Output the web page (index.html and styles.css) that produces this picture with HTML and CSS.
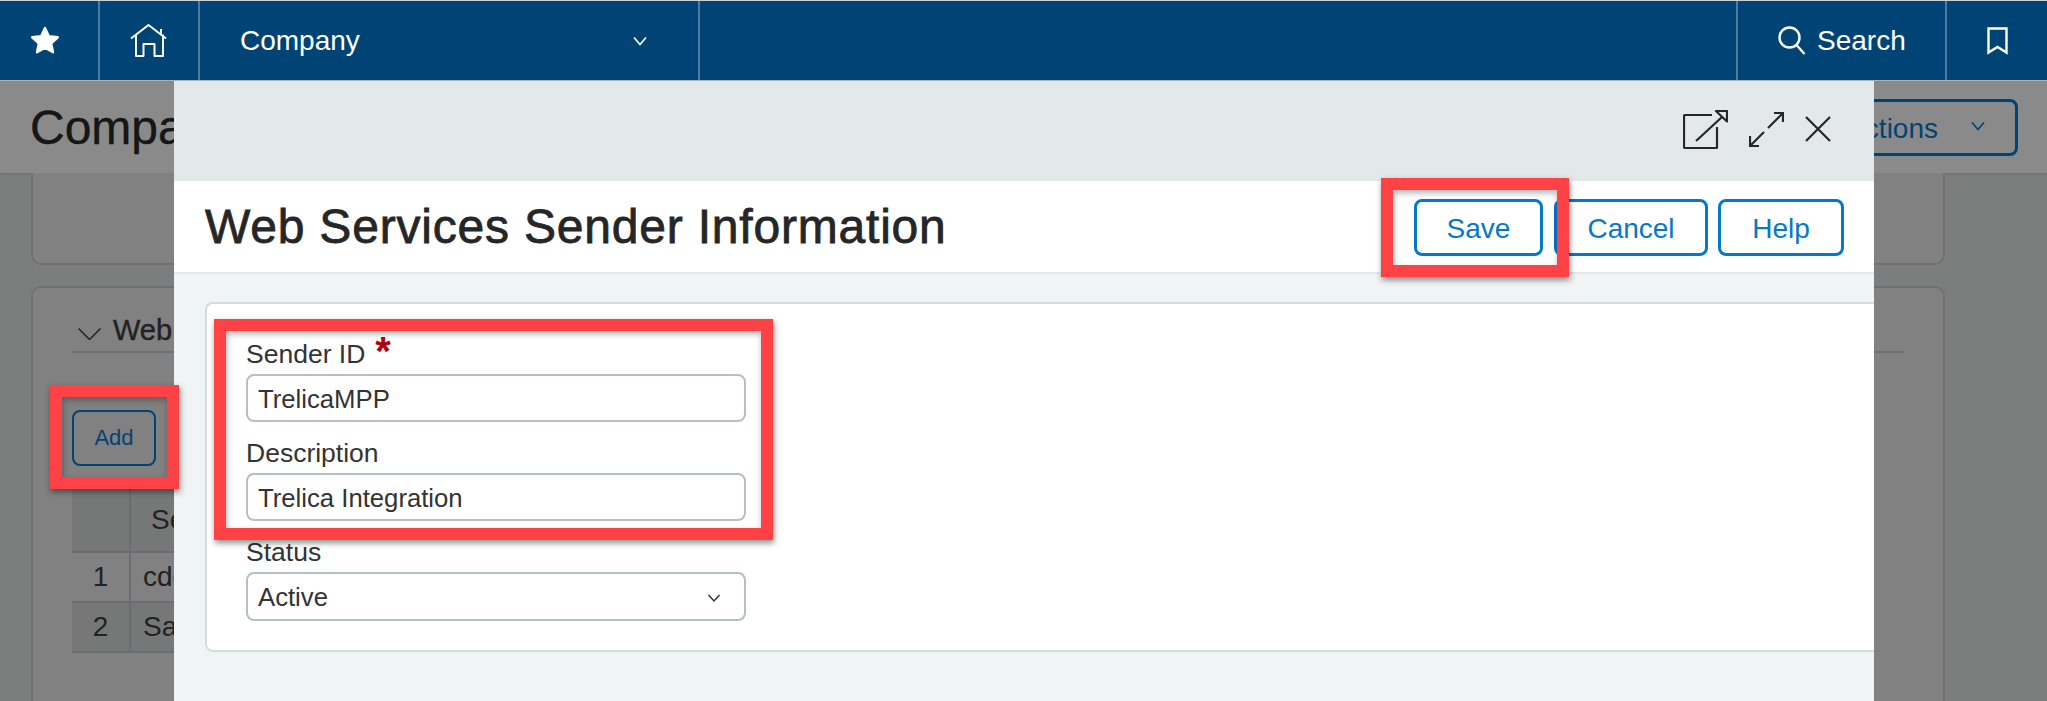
FILE: index.html
```html
<!DOCTYPE html>
<html lang="en">
<head>
  <meta charset="UTF-8" />
  <title>Web Services Sender Information</title>
  <link rel="stylesheet" href="styles.css">
</head>
<body>

  <header class="topbar">
    <div class="topbar-cell star-cell">
      <svg width="30" height="29" viewBox="0 0 30 29"><path d="M15 2l3.800 8.200 9 1.100-6.600 6.100 1.800 8.900-8-4.500-8 4.500 1.800-8.900-6.600-6.100 9-1.100z" fill="#fff" stroke="#fff" stroke-width="2.400" stroke-linejoin="round"/></svg>
    </div>
    <div class="topbar-cell home-cell">
      <svg width="37" height="33" viewBox="0 0 37 33" fill="none" stroke="#fff" stroke-width="2" stroke-linejoin="round"><path d="M1 14.500L18.500 1 36 14.500M6 10.500V32h7.500V20h11v12H33V10.500M31 5v6"/></svg>
    </div>
    <div class="topbar-cell company-cell">
      <span>Company</span>
      <svg width="16" height="12" viewBox="0 0 16 12" fill="none" stroke="#fff" stroke-width="1.600"><path d="M2 2.500l6 7 6-7"/></svg>
    </div>
    <div class="topbar-spacer"></div>
    <div class="topbar-cell search-cell">
      <svg width="29" height="29" viewBox="0 0 29 29" fill="none" stroke="#fff" stroke-width="2.400"><circle cx="11.500" cy="11.500" r="10"/><path d="M18.500 19l8 9"/></svg>
      <span>Search</span>
    </div>
    <div class="topbar-cell mark-cell">
      <svg width="21" height="28" viewBox="0 0 21 28" fill="none" stroke="#fff" stroke-width="2.400"><path d="M1.500 1.500h18v24l-9-5.500-9 5.500z"/></svg>
    </div>
  </header>

  <div class="page">
    <div class="page-title">
      <h1>Company</h1>
      <div class="actions-btn"><span>Actions</span><svg width="16" height="12" viewBox="0 0 16 12" fill="none" stroke="#004476" stroke-width="1.600"><path d="M2 2.500l6 7 6-7"/></svg></div>
    </div>
    <div class="page-card upper-card"></div>
    <div class="page-card lower-card">
      <div class="section-head">
        <svg width="23" height="12" viewBox="0 0 23 12" fill="none" stroke="#222" stroke-width="1.500"><path d="M.5.500l11 11 11-11"/></svg>
        <span>Web</span>
      </div>
      <div class="add-btn">Add</div>
      <table class="senders">
        <tr class="shaded"><th></th><th>Se</th></tr>
        <tr><td class="num">1</td><td>cde</td></tr>
        <tr class="shaded"><td class="num">2</td><td>Sa</td></tr>
      </table>
    </div>
  </div>

  <div class="modal">
    <div class="modal-tools">
      <svg width="45" height="39" viewBox="0 0 45 39" fill="none" stroke="#262626" stroke-width="2.200" stroke-linejoin="round"><path d="M34 17v20.500a.500.500 0 0 1-.500.500H2a1 1 0 0 1-1-1V6a1 1 0 0 1 1-1h27"/><path d="M13 31l26-24"/><path d="M33 1h11v10.500z"/></svg>
      <svg width="35" height="35" viewBox="0 0 35 35" fill="none" stroke="#262626" stroke-width="2.200"><path d="M25 1h9v9M34 1L19 16M15 20L1 34M1 24v10h9"/></svg>
      <svg width="26" height="26" viewBox="0 0 26 26" fill="none" stroke="#262626" stroke-width="2.200"><path d="M1 1l24 24M25 1L1 25"/></svg>
    </div>
    <div class="modal-head">
      <h2>Web Services Sender Information</h2>
      <div class="modal-buttons">
        <button class="modal-btn save-btn">Save</button>
        <button class="modal-btn cancel-btn">Cancel</button>
        <button class="modal-btn help-btn">Help</button>
      </div>
    </div>
    <div class="modal-body">
      <div class="form-card">
        <label>Sender ID<span class="req">*</span></label>
        <div class="field">TrelicaMPP</div>
        <label>Description</label>
        <div class="field">Trelica Integration</div>
        <label>Status</label>
        <div class="field select-field">
          <span>Active</span>
          <svg width="14" height="10" viewBox="0 0 14 10" fill="none" stroke="#333" stroke-width="1.500"><path d="M1.500 2l5.500 6 5.500-6"/></svg>
        </div>
      </div>
    </div>
  </div>

  <div class="mark mark-add"></div>
  <div class="mark mark-save"></div>
  <div class="mark mark-form"></div>

</body>
</html>
```

FILE: styles.css
```css
html, body {
  margin: 0;
  height: 701px;
  overflow: hidden;
}

body {
  font-family: 'Liberation Sans', Arial, sans-serif;
  color: #222;
  background: #7c7e7d;
  position: relative;
}

.topbar {
  display: flex;
  box-sizing: border-box;
  height: 81px;
  background: #004476;
  color: #fff;
  font-size: 28px;
  border-top: 1px solid #c9d3d9;
  border-bottom: 1px solid #a9b2b7;
}

.topbar-cell {
  display: flex;
  align-items: center;
  flex: none;
  box-sizing: border-box;
  border-right: 2px solid #4d7ca0;
}

.star-cell {
  width: 100px;
  justify-content: center;
  padding-right: 8px;
}

.home-cell {
  width: 100px;
  justify-content: center;
  padding-right: 2px;
}

.company-cell {
  width: 500px;
  justify-content: space-between;
  padding: 0 50px 0 40px;
}

.topbar-spacer {
  flex: 1;
  border-right: 2px solid #4d7ca0;
}

.search-cell {
  width: 209px;
  gap: 10px;
  padding-left: 40px;
}

.mark-cell {
  width: 100px;
  justify-content: center;
  border-right: 0;
}

.page {
  height: 620px;
  overflow: hidden;
  background: #7c7e7d;
}

.page-title {
  height: 92px;
  background: #8a8a8a;
  display: flex;
  align-items: center;
  justify-content: space-between;
  padding: 0 29px 0 30px;
  box-shadow: 0 1px 2px rgba(0, 0, 0, 0.15);
}

.page-title h1 {
  margin: 0;
  font-size: 48px;
  font-weight: normal;
  -webkit-text-stroke: 0.4px #161616;
  color: #161616;
}

.actions-btn {
  width: 200px;
  height: 57px;
  box-sizing: border-box;
  border: 3px solid #004476;
  border-radius: 8px;
  display: flex;
  align-items: center;
  justify-content: flex-end;
  gap: 32px;
  padding: 4px 29px 0 0;
  font-size: 28px;
  color: #004476;
}

.actions-btn svg {
  margin-bottom: 6px;
}

.page-card {
  margin: 0 102px 0 31px;
  box-sizing: border-box;
  border: 2px solid #6f7275;
  border-radius: 10px;
  background: #808180;
}

.upper-card {
  height: 92px;
  border-top: 0;
  border-top-left-radius: 0;
  border-top-right-radius: 0;
  margin-bottom: 21px;
}

.lower-card {
  height: 415px;
  border-bottom: 0;
  border-bottom-left-radius: 0;
  border-bottom-right-radius: 0;
  padding: 24px 39px 0 39px;
}

.section-head {
  display: flex;
  align-items: center;
  box-sizing: border-box;
  height: 41px;
  gap: 12px;
  padding: 0 0 3px 6px;
  font-size: 29px;
  -webkit-text-stroke: 0.4px #222;
  border-bottom: 2px solid #6f7275;
}

.section-head svg {
  margin-top: 8px;
}

.add-btn {
  width: 84px;
  height: 56px;
  box-sizing: border-box;
  margin: 57px 0 0 0;
  border: 2px solid #004476;
  border-radius: 8px;
  color: #004476;
  font-size: 22px;
  display: flex;
  align-items: center;
  justify-content: center;
}

.senders {
  margin-top: 22px;
  border-collapse: collapse;
  font-size: 28px;
  width: 800px;
}

.senders th {
  height: 63px;
  font-weight: normal;
  text-align: left;
  padding: 0 0 0 20px;
  border-bottom: 2px solid #6a6d70;
  border-right: 2px solid #6a6d70;
}

.senders td {
  height: 48px;
  padding: 0 0 0 12px;
  border-bottom: 2px solid #6a6d70;
  border-right: 2px solid #6a6d70;
}

.senders td.num {
  width: 57px;
  padding: 0;
  text-align: center;
}

.shaded {
  background: #767877;
}

.modal {
  position: absolute;
  left: 174px;
  top: 81px;
  width: 1700px;
  height: 620px;
  display: flex;
  flex-direction: column;
  background: #f1f4f5;
}

.modal-tools {
  height: 100px;
  background: #e3e9eb;
  box-sizing: border-box;
  display: flex;
  align-items: center;
  justify-content: flex-end;
  gap: 21px;
  padding: 0 43px 4px 0;
}

.modal-head {
  height: 93px;
  box-sizing: border-box;
  background: #fff;
  border-bottom: 2px solid #e3e9eb;
  display: flex;
  align-items: center;
  justify-content: space-between;
  padding: 0 30px 0 31px;
}

.modal-head h2 {
  margin: 0;
  font-size: 48px;
  font-weight: normal;
  letter-spacing: 0.8px;
  -webkit-text-stroke: 0.8px #262626;
  color: #262626;
}

.modal-buttons {
  display: flex;
  gap: 10px;
  padding-top: 1px;
}

.modal-btn {
  height: 57px;
  box-sizing: border-box;
  background: #fff;
  border: 3px solid #0478c9;
  border-radius: 8px;
  color: #0478c9;
  font-family: inherit;
  font-size: 28px;
  padding: 3px 0 0;
}

.save-btn { width: 129px; margin-right: 1px; }
.cancel-btn { width: 154px; }
.help-btn { width: 126px; }

.modal-body {
  flex: 1;
  padding: 28px 0 0 31px;
}

.form-card {
  box-sizing: border-box;
  height: 350px;
  background: #fff;
  border: 2px solid #d5dcdf;
  border-right: 0;
  border-radius: 8px 0 0 8px;
  padding: 34px 0 0 39px;
}

label {
  display: block;
  font-size: 26.500px;
  color: #333;
  height: 36px;
  line-height: 33px;
}

.req {
  color: #b3000e;
  font-size: 40px;
  font-weight: bold;
  line-height: 26px;
  margin-left: 10px;
  vertical-align: top;
}

.field {
  width: 500px;
  height: 48px;
  box-sizing: border-box;
  border: 2px solid #b3c1c3;
  border-radius: 8px;
  display: flex;
  align-items: center;
  justify-content: space-between;
  padding: 2px 23px 0 10px;
  font-size: 25.700px;
  color: #333;
  margin-bottom: 15px;
}

.select-field {
  height: 49px;
}

.mark {
  position: absolute;
  box-sizing: border-box;
  border: 12px solid #ff4245;
  box-shadow: 1px 3px 6px rgba(0, 0, 0, 0.45), inset 1px 3px 6px rgba(0, 0, 0, 0.3);
}

.mark-add {
  left: 50px;
  top: 385px;
  width: 129px;
  height: 104px;
}

.mark-save {
  left: 1381px;
  top: 178px;
  width: 188px;
  height: 99px;
}

.mark-form {
  left: 214px;
  top: 319px;
  width: 559px;
  height: 221px;
}
```
